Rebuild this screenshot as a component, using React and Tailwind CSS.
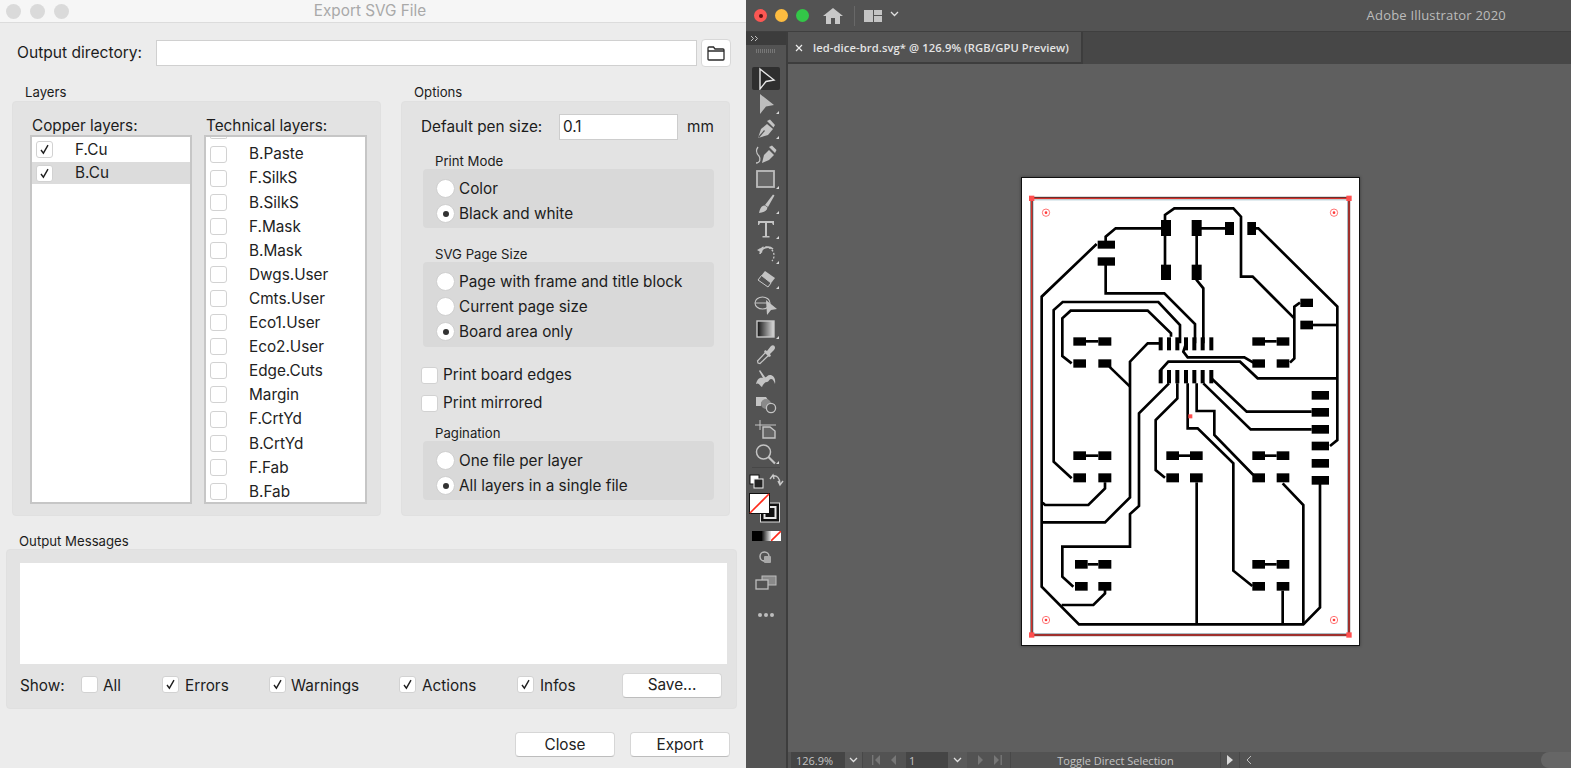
const traces = [
  "450,150 450,135 478,115 655,115 678,140 678,320 713,320 838,445",
  "855,398 838,410 838,565 825,578",
  "710,175 730,175 967,410 967,810 945,828",
  "875,465 967,465",
  "272,215 272,200 302,175 450,175",
  "272,275 272,370 448,370 540,462 540,520",
  "245,222 80,380 80,1250 192,1363 865,1363 915,1312 915,930",
  "140,1305 235,1305 270,1270 270,1250",
  "270,937 270,955 220,1005 90,1005 83,998",
  "83,1057 270,1057 345,982 345,575 398,520 435,520",
  "283,590 345,650",
  "462,640 372,730 372,1008 345,1032 345,1130 142,1130 142,1220 175,1250",
  "487,640 487,685 422,750 422,900 450,923",
  "518,640 518,775 548,775 655,880 655,1202 712,1248",
  "545,640 545,723 598,723 598,795 715,915",
  "565,640 707,778 890,778",
  "589,625 695,725 890,725",
  "495,520 495,465 430,396 143,396 116,420 116,875 170,925",
  "468,500 468,490 398,422 167,422 142,445 142,558 170,580",
  "513,520 505,545 518,562 688,562 715,578",
  "437,610 437,600 460,575 675,575 728,625 967,625",
  "450,198 450,300",
  "545,175 640,175",
  "545,198 545,330 565,355 565,520",
  "213,514 250,514",
  "750,514 785,514",
  "213,857 250,857",
  "492,857 525,857",
  "750,857 785,857",
  "218,1183 250,1183",
  "750,1183 785,1183",
  "545,937 545,1363",
  "803,940 865,1005 865,1363",
  "803,1262 803,1363",
];
const pads = [
  [248, 212, 52, 24], [248, 262, 52, 25],
  [438, 150, 30, 48], [438, 284, 30, 46], [530, 150, 30, 48], [530, 284, 30, 46],
  [630, 156, 27, 39], [697, 156, 26, 39], [856, 386, 38, 25], [856, 452, 38, 26],
  [175, 502, 38, 25], [250, 502, 39, 25], [175, 568, 38, 25], [250, 568, 39, 25],
  [712, 502, 38, 25], [785, 502, 38, 25], [712, 568, 38, 25], [785, 568, 38, 25],
  [175, 844, 38, 26], [250, 844, 39, 26], [175, 910, 38, 27], [250, 910, 39, 27],
  [454, 844, 38, 26], [525, 844, 38, 26], [454, 910, 38, 27], [525, 910, 38, 27],
  [712, 844, 38, 26], [785, 844, 38, 26], [712, 910, 38, 27], [785, 910, 38, 27],
  [180, 1170, 38, 26], [250, 1170, 39, 26], [180, 1236, 38, 26], [250, 1236, 39, 26],
  [712, 1170, 38, 26], [785, 1170, 38, 26], [712, 1236, 38, 26], [785, 1236, 38, 26],
  [890, 663, 52, 26], [890, 714, 52, 26], [890, 765, 52, 26], [890, 815, 52, 26], [890, 867, 52, 26], [890, 918, 52, 26],
];
const icX = [437, 462, 487, 513, 538, 563, 589];

function Pcb() {
  return (
    <svg width="337" height="467" viewBox="21 24 1011 1401" className="block">
      <rect x="21" y="24" width="1011" height="1401" fill="#fff" />
      <rect x="55" y="90" width="942" height="1300" fill="none" stroke="#a9c6d2" strokeWidth="2" />
      {traces.map((t, i) => (
        <polyline key={i} points={t} fill="none" stroke="#000" strokeWidth="8" />
      ))}
      {pads.map((p, i) => (
        <rect key={i} x={p[0]} y={p[1]} width={p[2]} height={p[3]} fill="#000" />
      ))}
      {icX.map((x) => (
        <g key={x}>
          <rect x={x - 6} y="502" width="12" height="39" fill="#000" />
          <rect x={x - 6} y="600" width="12" height="40" fill="#000" />
        </g>
      ))}
      <rect x="50" y="84" width="952" height="1311" fill="none" stroke="#2e2e2e" strokeWidth="7" />
      <rect x="50" y="85" width="952" height="1310" fill="none" stroke="#d8322c" strokeWidth="4" />
      {[[50, 85], [1002, 85], [50, 1395], [1002, 1395]].map(([x, y], i) => (
        <rect key={i} x={x - 8} y={y - 8} width="16" height="16" fill="#ff4f4f" />
      ))}
      <rect x="520" y="733" width="12" height="12" fill="#ff4f4f" />
      {[[93, 128], [957, 128], [93, 1350], [957, 1350]].map(([x, y], i) => (
        <g key={i}>
          <circle cx={x} cy={y} r="11" fill="none" stroke="#ff5a5a" strokeWidth="2.5" />
          <circle cx={x} cy={y} r="4" fill="#ff3b3b" />
        </g>
      ))}
    </svg>
  );
}

function Check({ on }) {
  return (
    <span className="flex h-[17px] w-[17px] shrink-0 items-center justify-center rounded-[3px] border border-[#d2d2d2] bg-white">
      {on && (
        <svg width="11" height="11" viewBox="0 0 11 11">
          <path d="M2 6 L4.4 9.2 L9 1.2" fill="none" stroke="#1e1e1e" strokeWidth="1.4" />
        </svg>
      )}
    </span>
  );
}

function Radio({ on }) {
  return (
    <span className="flex h-[19px] w-[19px] shrink-0 items-center justify-center rounded-full border border-[#cfcfcf] bg-white">
      {on && <span className="h-[6px] w-[6px] rounded-full bg-[#333]" />}
    </span>
  );
}

function RadioRow({ on, children }) {
  return (
    <div className="flex h-[25px] items-center gap-[4px] pl-[13px] text-[15.3px] leading-none">
      <Radio on={on} />
      <span>{children}</span>
    </div>
  );
}

function GroupLabel({ children, className }) {
  return <div className={"h-[16px] pl-[14px] text-[13.2px] leading-[16px] " + className}>{children}</div>;
}

function RadioGroup({ h, children }) {
  return <div className={"ml-[2px] w-[291px] rounded-[4px] bg-[#d9d9d9] pt-[7px] " + h}>{children}</div>;
}

function LayerRow({ name, on, sel, h }) {
  return (
    <div className={"flex items-center pl-[4px] text-[15.3px] leading-none text-[#222] " + h + (sel ? " bg-[#dcdcdc]" : "")}>
      <Check on={on} />
      <span className="ml-[22px]">{name}</span>
    </div>
  );
}

function ShowItem({ w, gap, on, label }) {
  return (
    <div className={"flex items-center " + w + " " + gap}>
      <Check on={on} />
      <span className="pt-[2px]">{label}</span>
    </div>
  );
}

function MacButton({ children, className }) {
  return (
    <div className={"flex items-center justify-center rounded-[4px] border border-[#d6d6d6] border-b-[#bdbdbd] bg-white text-[15.3px] leading-none text-[#222] " + className}>
      {children}
    </div>
  );
}

const technical = ["B.Paste", "F.SilkS", "B.SilkS", "F.Mask", "B.Mask", "Dwgs.User", "Cmts.User", "Eco1.User", "Eco2.User", "Edge.Cuts", "Margin", "F.CrtYd", "B.CrtYd", "F.Fab", "B.Fab"];

function Dialog() {
  return (
    <div className="flex h-[768px] w-[746px] shrink-0 flex-col bg-[#ececec] text-[#1c1c1c]">
      <div className="grid h-[23px] grid-cols-[1fr_auto_1fr] items-center border-b border-[#dcdcdc] bg-[#f6f6f6]">
        <div className="flex gap-[9px] pl-[6px]">
          <span className="h-[15px] w-[15px] rounded-full bg-[#dadada]" />
          <span className="h-[15px] w-[15px] rounded-full bg-[#dadada]" />
          <span className="h-[15px] w-[15px] rounded-full bg-[#dadada]" />
        </div>
        <div className="mr-[6px] text-[15.3px] leading-none text-[#a9a9a9]">Export SVG File</div>
        <div />
      </div>

      <div className="mt-[16px] flex h-[28px] items-center pl-[17px]">
        <div className="w-[139px] text-[15.6px] leading-none">Output directory:</div>
        <div className="h-[26px] w-[541px] border border-[#d0d0d0] bg-white" />
        <div className="ml-[4px] flex h-[28px] w-[30px] items-center justify-center rounded-[4px] border border-[#d8d8d8] bg-white">
          <svg width="18" height="15" viewBox="0 0 18 15">
            <path d="M1 13.2 V2 Q1 1 2 1 H6.5 L8 3 H16 Q17 3 17 4 V13 Q17 14 16 14 H2 Q1 14 1 13.2 Z M1 5 H17" fill="none" stroke="#2b2b2b" strokeWidth="1.3" />
          </svg>
        </div>
      </div>

      <div className="mt-[17px] flex">
        <div className="ml-[12px] w-[369px]">
          <div className="h-[17px] pl-[13px] text-[13.2px] leading-[16px]">Layers</div>
          <div className="flex h-[415px] gap-[12px] rounded-[4px] border border-[#e0e0e0] bg-[#e3e3e3] pl-[17px] pt-[15px]">
            <div className="w-[162px]">
              <div className="h-[18px] pl-[2px] text-[15.3px] leading-[18px]">Copper layers:</div>
              <div className="h-[369px] border-2 border-[#c6c6c6] bg-white">
                <LayerRow name="F.Cu" on h="h-[25px]" />
                <LayerRow name="B.Cu" on sel h="h-[22px]" />
              </div>
            </div>
            <div className="w-[163px]">
              <div className="h-[18px] pl-[2px] text-[15.3px] leading-[18px]">Technical layers:</div>
              <div className="h-[369px] overflow-hidden border-2 border-[#c6c6c6] bg-white">
                <div className="h-[5px] pl-[4px]">
                  <div className="h-[2px] w-[17px] rounded-b-[3px] border-x border-b border-[#d2d2d2]" />
                </div>
                {technical.map((n) => (
                  <LayerRow key={n} name={n} h="h-[24.1px]" />
                ))}
              </div>
            </div>
          </div>
        </div>

        <div className="ml-[20px] w-[329px]">
          <div className="h-[17px] pl-[13px] text-[13.2px] leading-[16px]">Options</div>
          <div className="h-[415px] rounded-[4px] border border-[#e0e0e0] bg-[#e3e3e3] pl-[19px] pt-[12px] text-[15.3px]">
            <div className="flex h-[26px] items-center leading-none">
              <div className="w-[138px]">Default pen size:</div>
              <div className="flex h-[26px] w-[119px] items-center border border-[#cdcdcd] bg-white pl-[3px]">0.1</div>
              <div className="ml-[9px]">mm</div>
            </div>
            <GroupLabel className="mt-[13px]">Print Mode</GroupLabel>
            <RadioGroup h="h-[59px]">
              <RadioRow>Color</RadioRow>
              <RadioRow on>Black and white</RadioRow>
            </RadioGroup>
            <GroupLabel className="mt-[18px]">SVG Page Size</GroupLabel>
            <RadioGroup h="h-[85px]">
              <RadioRow>Page with frame and title block</RadioRow>
              <RadioRow>Current page size</RadioRow>
              <RadioRow on>Board area only</RadioRow>
            </RadioGroup>
            <div className="mt-[16px] flex h-[24px] items-center gap-[5px] leading-none">
              <Check />
              <span>Print board edges</span>
            </div>
            <div className="mt-[4px] flex h-[24px] items-center gap-[5px] leading-none">
              <Check />
              <span>Print mirrored</span>
            </div>
            <GroupLabel className="mt-[10px]">Pagination</GroupLabel>
            <RadioGroup h="h-[59px]">
              <RadioRow>One file per layer</RadioRow>
              <RadioRow on>All layers in a single file</RadioRow>
            </RadioGroup>
          </div>
        </div>
      </div>

      <div className="mt-[17px] h-[16px] pl-[19px] text-[13.2px] leading-[16px]">Output Messages</div>
      <div className="ml-[6px] h-[160px] w-[731px] rounded-[4px] border border-[#e0e0e0] bg-[#e3e3e3] pl-[13px] pt-[13px]">
        <div className="h-[101px] w-[707px] bg-white" />
        <div className="mt-[9px] flex h-[24px] items-center text-[15.3px] leading-none">
          <div className="w-[61px] pt-[2px]">Show:</div>
          <ShowItem w="w-[81px]" gap="gap-[5px]" label="All" />
          <ShowItem w="w-[107px]" gap="gap-[6px]" on label="Errors" />
          <ShowItem w="w-[130px]" gap="gap-[5px]" on label="Warnings" />
          <ShowItem w="w-[118px]" gap="gap-[6px]" on label="Actions" />
          <ShowItem w="w-[105px]" gap="gap-[6px]" on label="Infos" />
          <MacButton className="h-[25px] w-[100px]">Save...</MacButton>
        </div>
      </div>
      <div className="mt-[23px] flex justify-end gap-[15px] pr-[16px]">
        <MacButton className="h-[25px] w-[100px]">Close</MacButton>
        <MacButton className="h-[25px] w-[100px]">Export</MacButton>
      </div>
    </div>
  );
}

const G = "#c4c4c4";
const tools = [
  { t: 0, d: <polygon points="8,2 22,13 14,14.5 8,22" fill="#262626" stroke="#e6e6e6" strokeWidth="1.4" /> },
  { t: 1, d: <polygon points="8,2 22,13 14,14.5 8,22" fill="#bdbdbd" /> },
  { t: 1, d: <g><path d="M6 21 L9 12 L15 7 L21 12 L16 18 Z" fill={G} /><path d="M15 4 L18 2.5 L23 8 L21.5 10.5 Z" fill={G} /><path d="M6.5 20.5 L12.5 13.5" stroke="#535353" strokeWidth="1.2" /></g> },
  { t: 0, d: <g><path d="M10 21 L12 13 L17 8 L22 13 L17 18 Z" fill={G} /><path d="M17 5 L20 3.5 L24.5 8 L23 11 Z" fill={G} /><path d="M6 5 C3 9 5 12 7 14 C9 17 8 21 4 21" fill="none" stroke={G} strokeWidth="1.3" /></g> },
  { t: 1, d: <rect x="5" y="4" width="17" height="16" fill="#676767" stroke="#bdbdbd" strokeWidth="1.8" /> },
  { t: 1, d: <g><path d="M13 13 L21 2.5 L22.5 3.5 L16 15 Z" fill={G} /><path d="M7 21 C8 16 10 13 13 13.5 L15.5 15.5 C15 19 11 21 7 21 Z" fill={G} /></g> },
  { t: 1, d: <path d="M6 4 H22 V8 H21 L20 6 H15 V19 H17.5 V20.5 H10.5 V19 H13 V6 H8 L7 8 H6 Z" fill={G} /> },
  { t: 1, d: <g><path d="M7 8 A8 8 0 1 1 20 19" fill="none" stroke={G} strokeWidth="1.3" strokeDasharray="2 1.6" /><path d="M8 12 A8 8 0 0 1 21 7" fill="none" stroke={G} strokeWidth="1.6" /><polygon points="5,8 11,5 10,11" fill={G} /></g> },
  { t: 1, d: <g><polygon points="13,4 23,11 16,20 6,13" fill={G} /><polygon points="6,13 9.5,8.5 19,16 16,20" fill="#535353" stroke={G} strokeWidth="1" /></g> },
  { t: 0, d: <g><ellipse cx="10.5" cy="11" rx="7.5" ry="6" fill="none" stroke={G} strokeWidth="1.1" /><path d="M3 11 H15" stroke={G} strokeWidth="1" /><polygon points="14,8 25,17 19,18 15,23" fill={G} /></g> },
  { t: 1, d: <g><rect x="5" y="4" width="17" height="16" fill="url(#tg)" stroke="#c9c9c9" strokeWidth="1.4" /></g> },
  { t: 0, d: <g><path d="M6 21 L5.5 19 L14 10 L17 13 L8 21.5 Z" fill="none" stroke={G} strokeWidth="1.2" /><path d="M13 8 L15 9 L19 4 Q21 2.5 22.5 4 Q24 6 22 8 L18 12 L19 14 L17 15 L12 10 Z" fill={G} /></g> },
  { t: 0, d: <g><path d="M7 4 L11 11 C7 10 5 13 4 17 C7 15 8 19 10 20 C11 17 13 15 15 15 C17 15 17 12 19 12 C21 12 22 14 23 17 C24 11 21 8 18 8 C15 8 15 11 13 10 L8 3 Z" fill={G} /></g> },
  { t: 0, d: <g><path d="M4 5 H14 L16 8 H12 A6 6 0 0 0 9 14 H4 Z" fill={G} /><circle cx="14" cy="12" r="5" fill="#8a8a8a" /><circle cx="19" cy="16" r="4.6" fill="#535353" stroke={G} strokeWidth="1.3" /></g> },
  { t: 0, d: <g><path d="M3 8 H24 M8 3 V13" stroke={G} strokeWidth="1" fill="none" /><path d="M11 10 H18 L23 14 V21 H11 Z" fill="#666" stroke={G} strokeWidth="1.4" /></g> },
  { t: 1, d: <g><circle cx="11.5" cy="10" r="7" fill="none" stroke={G} strokeWidth="1.5" /><path d="M16.5 15 L23 21.5" stroke={G} strokeWidth="2.2" /></g> },
];

function Tool({ item, sel }) {
  return (
    <div className="flex h-[25px] items-center justify-center">
      <div className={"h-[23px] w-[28px] overflow-hidden rounded-[2px] " + (sel ? "bg-[#2f2f2f]" : "")}>
        <svg width="28" height="23" viewBox="0 0 28 23" className="block">
          <defs>
            <linearGradient id="tg" x1="0" x2="1" y1="0" y2="0">
              <stop offset="0" stopColor="#111" />
              <stop offset="1" stopColor="#ddd" />
            </linearGradient>
          </defs>
          {item.d}
          {item.t === 1 && <polygon points="27,19 27,22 24,22" fill="#d8d8d8" />}
        </svg>
      </div>
    </div>
  );
}

function Toolbar() {
  return (
    <div className="flex w-[42px] shrink-0 flex-col border-r-2 border-[#3d3d3d] bg-[#535353]">
      <div className="flex h-[13px] items-center bg-[#3c3c3c] pl-[4px]">
        <svg width="9" height="7" viewBox="0 0 9 7"><path d="M1 1 L3.5 3.5 L1 6 M5 1 L7.5 3.5 L5 6" fill="none" stroke="#cfcfcf" strokeWidth="0.9" /></svg>
      </div>
      <div className="mx-auto mt-[4px] h-[4px] w-[20px] bg-[repeating-linear-gradient(90deg,#777_0,#777_1px,transparent_1px,transparent_2px)]" />
      <div className="mt-[13px]">
        {tools.map((t, i) => (
          <Tool key={i} item={t} sel={i === 0} />
        ))}
      </div>
      <div className="mx-[6px] mt-[1px] h-px bg-[#474747]" />
      <svg width="40" height="61" viewBox="0 0 40 61" className="mt-[2px] block">
        <rect x="4" y="5" width="9" height="9" fill="#fff" stroke="#111" />
        <rect x="8" y="9" width="9" height="9" fill="#222" stroke="#eee" />
        <path d="M26 6 C31 5 34 8 34 14 M32 11 L34 15 L37 11 M24 9 L27 5 L28 9" fill="none" stroke="#c8c8c8" strokeWidth="1.4" />
        <rect x="14.5" y="33" width="19" height="19" fill="#111" stroke="#ddd" strokeWidth="1" />
        <rect x="18.5" y="37" width="11" height="11" fill="#111" stroke="#e8e8e8" strokeWidth="2" />
        <rect x="3.5" y="23.5" width="20" height="20" fill="#fff" stroke="#111" />
        <path d="M4 43 L23 24" stroke="#ff2a1a" strokeWidth="1.6" />
      </svg>
      <div className="mx-auto flex h-[10px] w-[29px]">
        <span className="h-full w-[10px] bg-black" />
        <span className="h-full w-[9px] bg-[linear-gradient(90deg,#111,#eee)]" />
        <svg width="10" height="10" viewBox="0 0 10 10"><rect width="10" height="10" fill="#fff" /><path d="M0 10 L10 0" stroke="#ff2a1a" strokeWidth="1.6" /></svg>
      </div>
      <div className="mt-[5px] flex h-[24px] items-center justify-center">
        <svg width="16" height="16" viewBox="0 0 16 16"><circle cx="6.5" cy="6.5" r="4.5" fill="none" stroke="#b8b8b8" strokeWidth="1.5" /><rect x="6" y="6" width="7" height="7" rx="1" fill="#a8a8a8" /></svg>
      </div>
      <div className="flex h-[26px] items-center justify-center">
        <svg width="22" height="16" viewBox="0 0 22 16"><rect x="7" y="1" width="14" height="9" fill="#8a8a8a" stroke="#bdbdbd" /><rect x="1" y="5" width="12" height="9" fill="#535353" stroke="#bdbdbd" strokeWidth="1.3" /></svg>
      </div>
      <div className="mt-[17px] flex justify-center gap-[2px]">
        <span className="h-[4px] w-[4px] rounded-full bg-[#bdbdbd]" />
        <span className="h-[4px] w-[4px] rounded-full bg-[#bdbdbd]" />
        <span className="h-[4px] w-[4px] rounded-full bg-[#bdbdbd]" />
      </div>
    </div>
  );
}

function Chevron() {
  return (
    <svg width="9" height="6" viewBox="0 0 9 6"><path d="M1 1 L4.5 4.5 L8 1" fill="none" stroke="#e0e0e0" strokeWidth="1.3" /></svg>
  );
}

function TopBar() {
  return (
    <div className="flex h-[32px] shrink-0 items-center border-b border-[#3f3f3f] bg-[#535353] pl-[8px]">
      <span className="flex h-[13px] w-[13px] items-center justify-center rounded-full bg-[#fc5753]">
        <span className="h-[4px] w-[4px] rounded-full bg-[#5a1010]" />
      </span>
      <span className="ml-[8px] h-[13px] w-[13px] rounded-full bg-[#fdbc40]" />
      <span className="ml-[8px] h-[13px] w-[13px] rounded-full bg-[#33c748]" />
      <svg width="20" height="18" viewBox="0 0 20 18" className="ml-[14px]">
        <path d="M10 1 L20 9 H17 V17 H12 V11 H8 V17 H3 V9 H0 Z" fill="#c8c8c8" />
      </svg>
      <span className="ml-[11px] h-[20px] w-px bg-[#686868]" />
      <div className="ml-[9px] flex h-[12px] w-[18px] gap-px">
        <span className="h-full w-[9px] bg-[#c4c4c4]" />
        <span className="flex w-[8px] flex-col gap-px">
          <span className="flex-1 bg-[#c4c4c4]" />
          <span className="flex-1 bg-[#c4c4c4]" />
        </span>
      </div>
      <span className="ml-[8px] mb-[4px] flex"><Chevron /></span>
      <div className="ml-auto pr-[65px] text-[13px] leading-none tracking-[0.2px] text-[#bcbcbc]">Adobe Illustrator 2020</div>
    </div>
  );
}

function Nav({ dir, bar }) {
  return (
    <svg width="9" height="10" viewBox="0 0 9 10">
      {dir === "l" ? <polygon points={bar ? "8,0 8,10 3,5" : "7,0 7,10 2,5"} fill="#777" /> : <polygon points={bar ? "1,0 1,10 6,5" : "2,0 2,10 7,5"} fill="#777" />}
      {bar && <rect x={dir === "l" ? 0 : 7.5} y="0" width="1.4" height="10" fill="#777" />}
    </svg>
  );
}

function StatusBar() {
  return (
    <div className="flex h-[16px] shrink-0 items-stretch bg-[#535353] text-[11px] leading-none text-[#c4c4c4]">
      <div className="ml-[3px] flex w-[54px] items-center bg-[#454545] pl-[5px]">126.9%</div>
      <div className="flex w-[18px] items-center justify-center border-r border-[#484848] bg-[#5a5a5a]"><Chevron /></div>
      <div className="flex w-[43px] items-center justify-center gap-[8px]"><Nav dir="l" bar /><Nav dir="l" /></div>
      <div className="flex w-[42px] items-center bg-[#454545] pl-[3px]">1</div>
      <div className="flex w-[19px] items-center justify-center bg-[#5a5a5a]"><Chevron /></div>
      <div className="flex w-[44px] items-center justify-center gap-[8px] border-r border-[#484848]"><Nav dir="r" /><Nav dir="r" bar /></div>
      <div className="flex w-[210px] items-center justify-center border-r border-[#484848]">Toggle Direct Selection</div>
      <div className="flex w-[19px] items-center justify-center border-r border-[#484848]">
        <svg width="6" height="10" viewBox="0 0 6 10"><polygon points="0,0 6,5 0,10" fill="#d8d8d8" /></svg>
      </div>
      <div className="flex w-[18px] items-center justify-center">
        <svg width="6" height="10" viewBox="0 0 6 10"><path d="M5 1 L1 5 L5 9" fill="none" stroke="#bdbdbd" strokeWidth="1" /></svg>
      </div>
      <div className="ml-auto h-full w-[30px] rounded-l-full bg-[#666]" />
    </div>
  );
}

function Illustrator() {
  return (
    <div className="flex h-[768px] flex-1 flex-col bg-[#535353] font-['Open_Sans',sans-serif]">
      <TopBar />
      <div className="flex min-h-0 flex-1">
        <Toolbar />
        <div className="flex min-w-0 flex-1 flex-col">
          <div className="flex h-[32px] shrink-0 bg-[#474747]">
            <div className="flex w-[295px] items-center border-b-2 border-r-2 border-[#3d3d3d] bg-[#535353] pl-[7px] pt-px text-[11.2px] font-semibold leading-none tracking-[0.1px] text-[#e4e4e4]">
              <svg width="8" height="8" viewBox="0 0 8 8"><path d="M1 1 L7 7 M7 1 L1 7" stroke="#eee" strokeWidth="1.2" /></svg>
              <span className="ml-[10px] whitespace-nowrap">led-dice-brd.svg* @ 126.9% (RGB/GPU Preview)</span>
            </div>
          </div>
          <div className="min-h-0 flex-1 bg-[#5f5f5f] pl-[233px] pt-[113px]">
            <div className="w-fit border border-[#111] shadow-[0_0_3px_rgba(0,0,0,0.4)]">
              <Pcb />
            </div>
          </div>
          <StatusBar />
        </div>
      </div>
    </div>
  );
}

export default function App() {
  return (
    <div className="flex h-[768px] w-[1571px] overflow-hidden font-['Inter',sans-serif]">
      <Dialog />
      <Illustrator />
    </div>
  );
}
